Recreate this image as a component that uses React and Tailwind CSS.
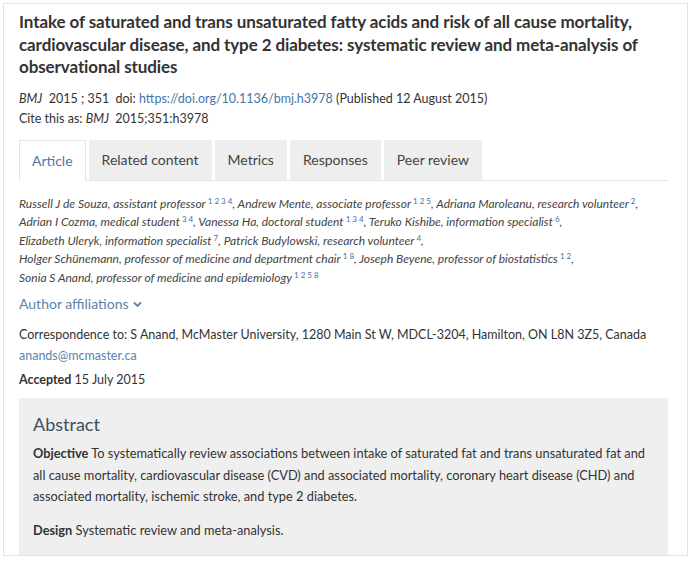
import React from "react";

const authors = [
  [
    ["Russell J de Souza, assistant professor", "1 2 3 4"],
    ["Andrew Mente, associate professor", "1 2 5"],
    ["Adriana Maroleanu, research volunteer", "2"],
  ],
  [
    ["Adrian I Cozma, medical student", "3 4"],
    ["Vanessa Ha, doctoral student", "1 3 4"],
    ["Teruko Kishibe, information specialist", "6"],
  ],
  [
    ["Elizabeth Uleryk, information specialist", "7"],
    ["Patrick Budylowski, research volunteer", "4"],
  ],
  [
    ["Holger Schünemann, professor of medicine and department chair", "1 8"],
    ["Joseph Beyene, professor of biostatistics", "1 2"],
  ],
  [["Sonia S Anand, professor of medicine and epidemiology", "1 2 5 8"]],
];

const tabs = ["Related content", "Metrics", "Responses", "Peer review"];

function Author({ name, sup, last }) {
  return (
    <span>
      {name}
      <sup className="not-italic text-[8px] text-[#3f6fa8] ml-[2px]">{sup}</sup>
      {last ? "" : ", "}
    </span>
  );
}

export default function App() {
  return (
    <div className="min-h-[564px] bg-white p-[3px] font-['Lato',sans-serif] text-[#333]">
      <div className="h-[553px] overflow-hidden border border-[#e3e3e3] pl-[15px] pr-[19px] pt-[7px]">
        <h1 className="text-[17px] font-bold leading-[22.5px] tracking-[-0.1px] text-[#333]">
          Intake of saturated and trans unsaturated fatty acids and risk of all cause mortality,
          cardiovascular disease, and type 2 diabetes: systematic review and meta-analysis of
          observational studies
        </h1>

        <div className="mt-[10px] text-[12.5px] leading-[20px]">
          <div>
            <i>BMJ</i>&nbsp; 2015 ; 351&nbsp; doi:{" "}
            <span className="text-[#3f76ab]">https://doi.org/10.1136/bmj.h3978</span> (Published 12 August 2015)
          </div>
          <div>
            Cite this as: <i>BMJ</i>&nbsp; 2015;351:h3978
          </div>
        </div>

        <div className="mt-[11px] flex items-end border-b border-[#e3e3e3] text-[14px]">
          <div className="-mb-px flex h-[41px] items-center border border-b-white border-[#e3e3e3] bg-white px-[12px] text-[#4d79a8]">
            Article
          </div>
          {tabs.map((t) => (
            <div key={t} className="ml-[3px] flex h-[40px] items-center bg-[#eeeeee] px-[13px] text-[#444]">
              {t}
            </div>
          ))}
          <div className="flex-1" />
        </div>

        <div className="mt-[14px] text-[12px] italic leading-[18.5px] text-[#444]">
          {authors.map((line, i) => (
            <div key={i}>
              {line.map(([n, s], j) => (
                <Author key={j} name={n} sup={s} last={i === authors.length - 1 && j === line.length - 1} />
              ))}
            </div>
          ))}
        </div>

        <div className="mt-[7px] flex items-center gap-[4px] text-[14px] leading-[20px] text-[#5b82ad]">
          Author affiliations
          <svg width="9" height="7" viewBox="0 0 9 7" fill="none">
            <path d="M1 1.5 L4.5 5 L8 1.5" stroke="#5b82ad" strokeWidth="1.8" />
          </svg>
        </div>

        <div className="mt-[10px] text-[12.5px] leading-[21px]">
          <div>Correspondence to: S Anand, McMaster University, 1280 Main St W, MDCL-3204, Hamilton, ON L8N 3Z5, Canada</div>
          <div className="text-[#5b82ad]">anands@mcmaster.ca</div>
          <div className="mt-[3px]">
            <b>Accepted</b> 15 July 2015
          </div>
        </div>

        <div className="mt-[8px] h-[200px] bg-[#efefef] px-[14px] pt-[14px]">
          <h2 className="text-[18px] leading-[24px] text-[#3e4e63]">Abstract</h2>
          <p className="mt-[7px] text-[12.8px] leading-[21.5px]">
            <b>Objective</b> To systematically review associations between intake of saturated fat and trans unsaturated fat and
            all cause mortality, cardiovascular disease (CVD) and associated mortality, coronary heart disease (CHD) and
            associated mortality, ischemic stroke, and type 2 diabetes.
          </p>
          <p className="mt-[12px] text-[12.8px] leading-[21.5px]">
            <b>Design</b> Systematic review and meta-analysis.
          </p>
        </div>
      </div>
    </div>
  );
}
